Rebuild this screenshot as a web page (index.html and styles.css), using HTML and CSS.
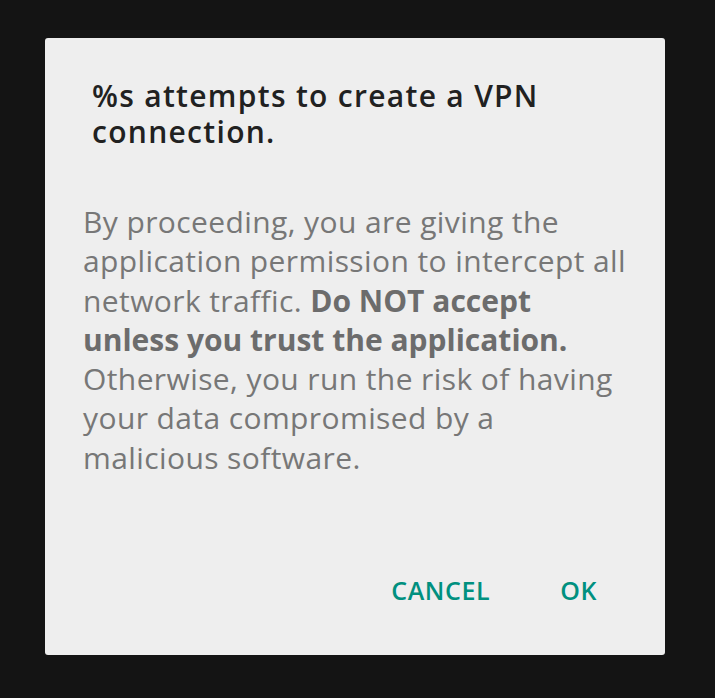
FILE: index.html
```html
<!DOCTYPE html>
<html>
<head>
<meta charset="utf-8">
<link rel="stylesheet" href="styles.css">
</head>
<body>
<div class="dialog">
  <h1 class="title">%s attempts to create a VPN<br>connection.</h1>
  <p class="message">By proceeding, you are giving the<br>application permission to intercept all<br>network traffic. <b>Do NOT accept<br>unless you trust the application.</b><br>Otherwise, you run the risk of having<br>your data compromised by a<br>malicious software.</p>
  <div class="actions">
    <button class="btn">CANCEL</button>
    <button class="btn">OK</button>
  </div>
</div>
</body>
</html>
```
FILE: styles.css
```css
html, body {
  margin: 0;
  padding: 0;
  background: #141414;
  height: 100%;
}
body {
  padding: 38px 50px 0 45px;
  box-sizing: border-box;
  font-family: "Open Sans", sans-serif;
}
.dialog {
  width: 620px;
  height: 617px;
  background: #eeeeee;
  border-radius: 3px;
  box-sizing: border-box;
  display: flex;
  flex-direction: column;
}
.title {
  margin: 0;
  padding: 40px 0 0 47px;
  font-size: 30px;
  line-height: 36px;
  font-weight: 600;
  letter-spacing: 1.3px;
  color: #212121;
}
.message {
  margin: 0;
  padding: 52px 0 0 38px;
  font-size: 30px;
  line-height: 39.3px;
  letter-spacing: 0.4px;
  color: #777777;
}
.message b {
  font-weight: 700;
  letter-spacing: 0;
  color: #6c6c6c;
}
.actions {
  display: flex;
  justify-content: flex-end;
  gap: 70px;
  padding: 0 68px 0 0;
  margin-top: auto;
  margin-bottom: 50px;
}
.btn {
  border: 0;
  background: none;
  padding: 0;
  font-family: "Open Sans", sans-serif;
  font-size: 25px;
  font-weight: 600;
  letter-spacing: 0.6px;
  color: #00907f;
  line-height: 30px;
}
```
